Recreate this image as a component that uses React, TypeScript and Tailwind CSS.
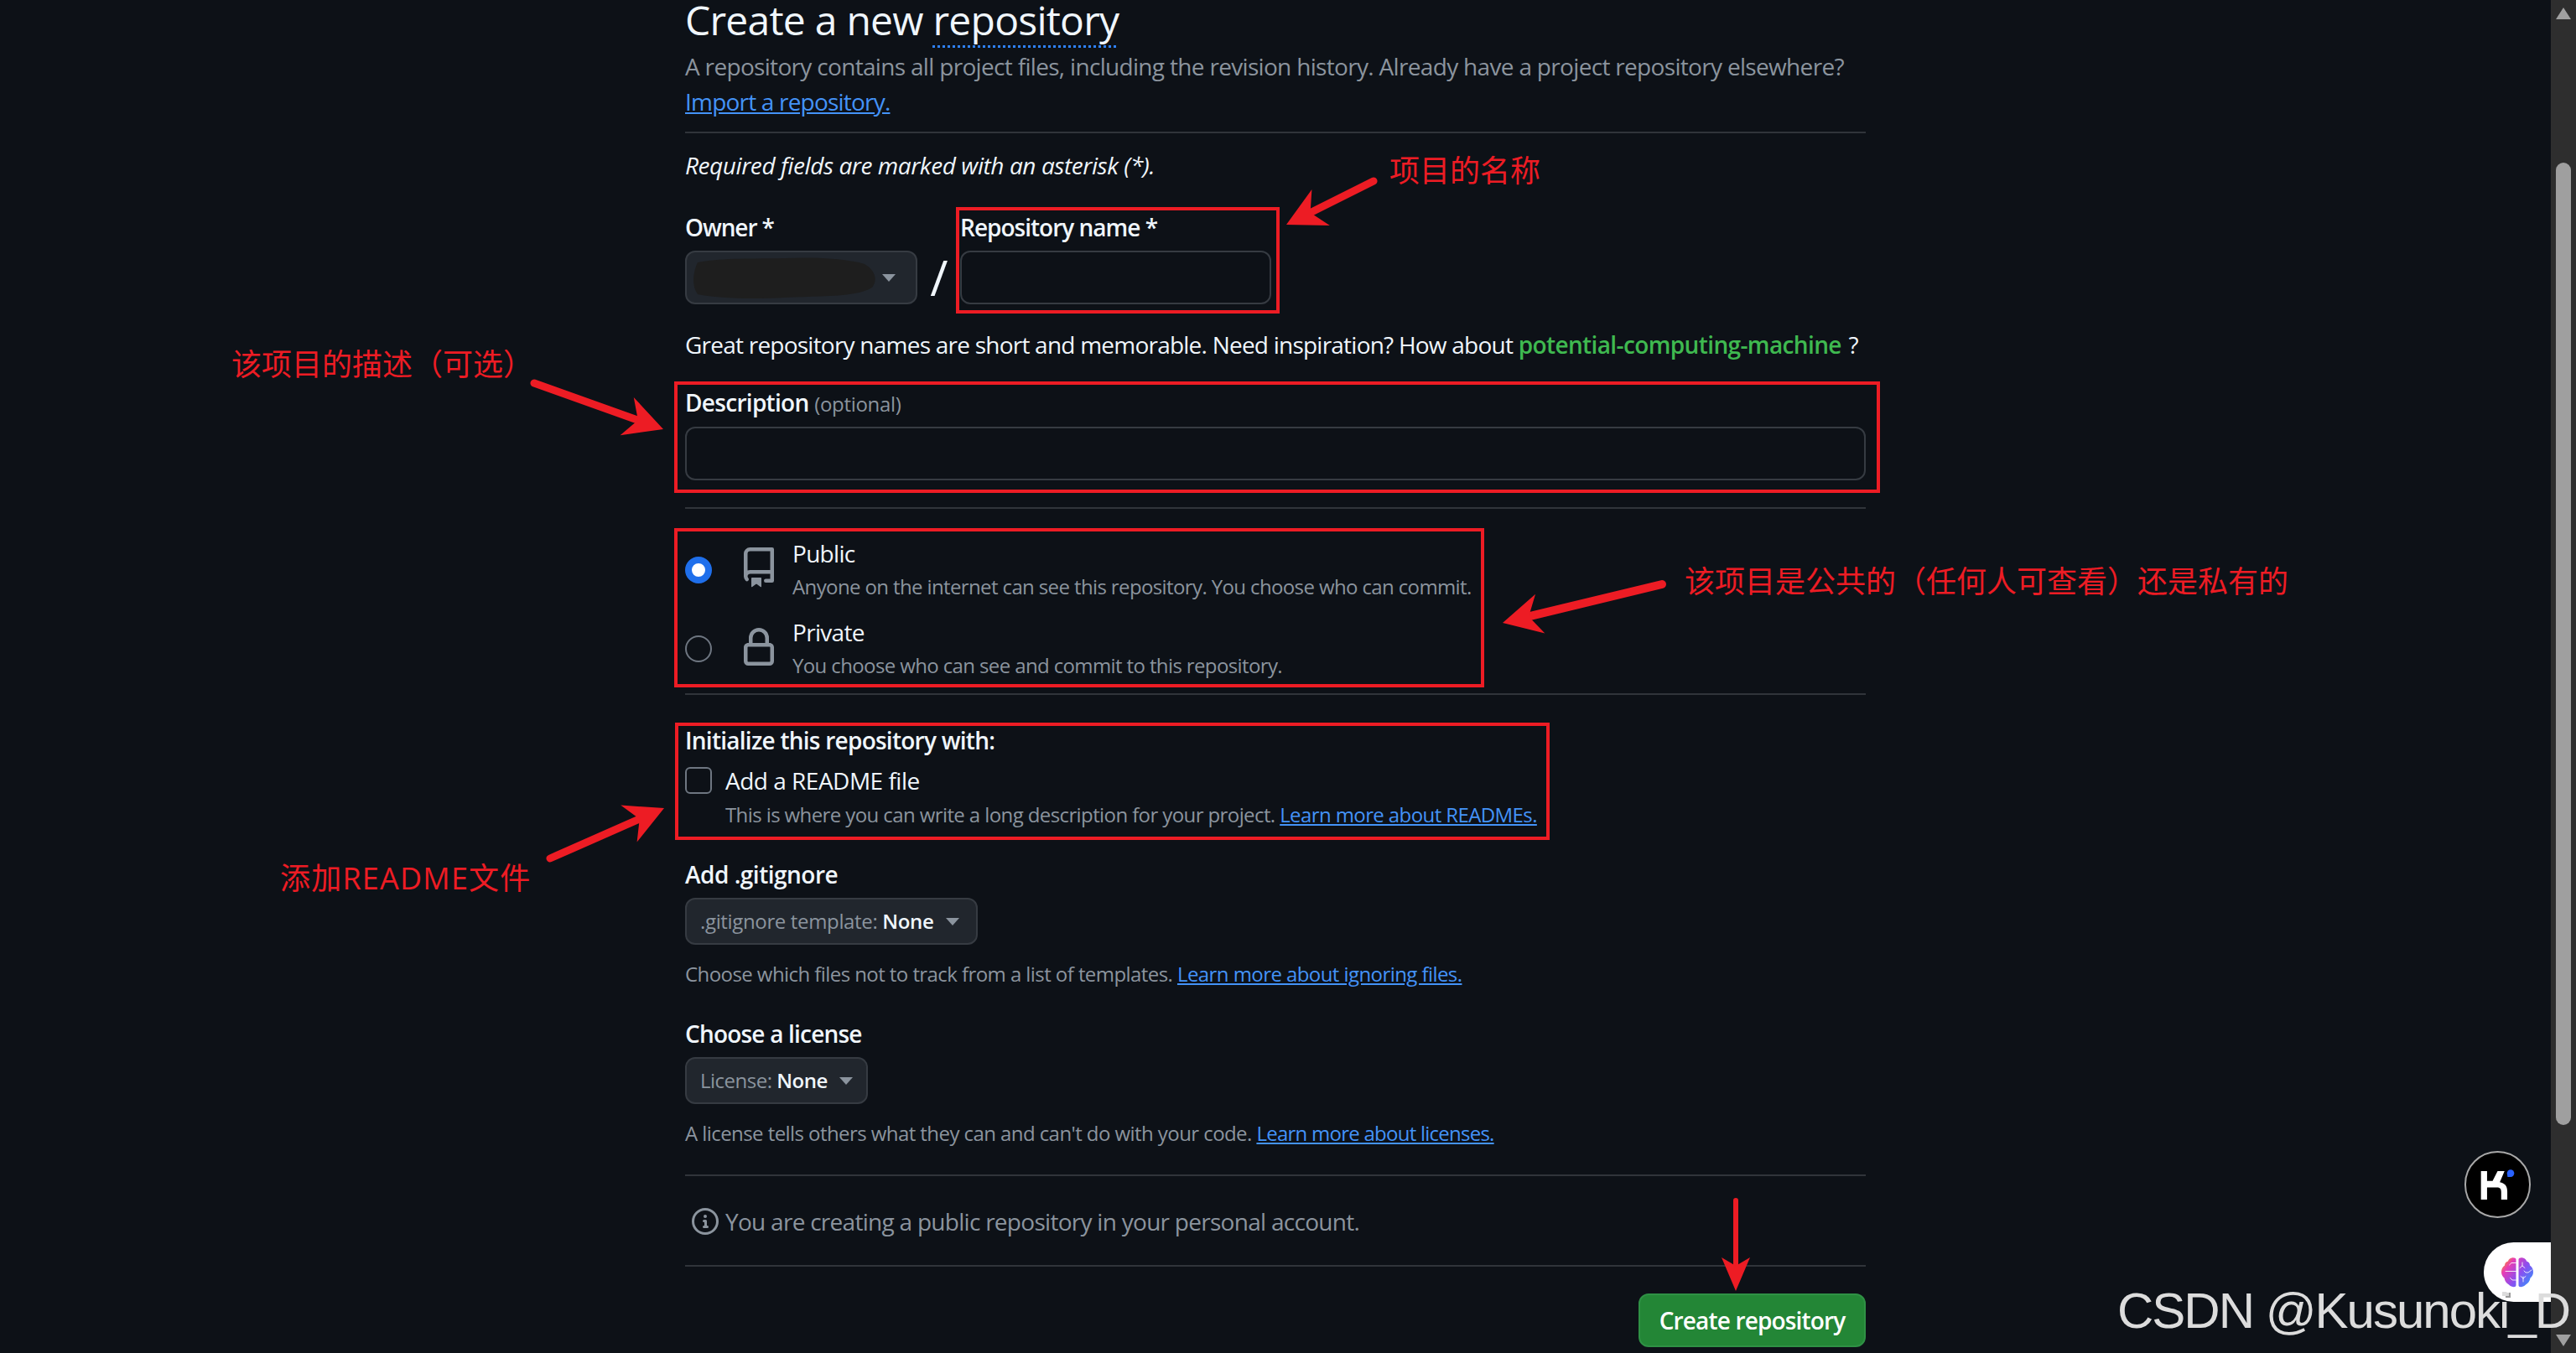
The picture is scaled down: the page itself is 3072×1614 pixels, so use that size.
import React from 'react';

const REPO_PATH = 'M2 2.5A2.5 2.5 0 0 1 4.5 0h8.75a.75.75 0 0 1 .75.75v12.5a.75.75 0 0 1-.75.75h-2.5a.75.75 0 0 1 0-1.5h1.75v-2h-8a1 1 0 0 0-.714 1.7.75.75 0 1 1-1.072 1.05A2.495 2.495 0 0 1 2 11.5Zm10.5-1h-8a1 1 0 0 0-1 1v6.708A2.486 2.486 0 0 1 4.5 9h8ZM5 12.25a.25.25 0 0 1 .25-.25h3.5a.25.25 0 0 1 .25.25v3.25a.25.25 0 0 1-.4.2l-1.45-1.087a.249.249 0 0 0-.3 0L5.4 15.7a.25.25 0 0 1-.4-.2Z';
const LOCK_PATH = 'M4 4a4 4 0 0 1 8 0v2h.25c.966 0 1.75.784 1.75 1.75v5.5A1.75 1.75 0 0 1 12.25 15h-8.5A1.75 1.75 0 0 1 2 13.25v-5.5C2 6.784 2.784 6 3.75 6H4Zm8.25 3.5h-8.5a.25.25 0 0 0-.25.25v5.5c0 .138.112.25.25.25h8.5a.25.25 0 0 0 .25-.25v-5.5a.25.25 0 0 0-.25-.25ZM10.5 6V4a2.5 2.5 0 1 0-5 0v2Z';
const INFO_PATH = 'M0 8a8 8 0 1 1 16 0A8 8 0 0 1 0 8Zm8-6.5a6.5 6.5 0 1 0 0 13 6.5 6.5 0 0 0 0-13ZM6.5 7.75A.75.75 0 0 1 7.25 7h1a.75.75 0 0 1 .75.75v2.75h.25a.75.75 0 0 1 0 1.5h-2a.75.75 0 0 1 0-1.5h.25v-2h-.25a.75.75 0 0 1-.75-.75ZM8 6a1 1 0 1 1 0-2 1 1 0 0 1 0 2Z';

function Octicon({ d, size, className }: { d: string; size: number; className?: string }) {
  return (
    <svg viewBox="0 0 16 16" width={size} height={size} fill="currentColor" className={className}>
      <path d={d} />
    </svg>
  );
}

function Caret() {
  return <span className="w-0 h-0 border-x-[8px] border-x-transparent border-t-[9px] border-t-[#8b949e]" />;
}

function Divider({ className }: { className: string }) {
  return <div className={`h-[2px] bg-[#30343a] ${className}`} />;
}

function Arrow({ x1, y1, x2, y2, w = 9, len = 46, half = 24, notch = 32 }: { x1: number; y1: number; x2: number; y2: number; w?: number; len?: number; half?: number; notch?: number }) {
  const l = Math.hypot(x2 - x1, y2 - y1);
  const ux = (x2 - x1) / l;
  const uy = (y2 - y1) / l;
  const at = (along: number, side: number) => `${x2 - ux * along - uy * side},${y2 - uy * along + ux * side}`;
  return (
    <g>
      <line x1={x1} y1={y1} x2={x2 - ux * notch} y2={y2 - uy * notch} stroke="#ed1c24" strokeWidth={w} strokeLinecap="round" />
      <polygon points={`${at(0, 0)} ${at(len, half)} ${at(notch, 0)} ${at(len, -half)}`} fill="#ed1c24" />
    </g>
  );
}

export default function App() {
  return (
    <div className="relative flex w-[3072px] h-[1614px] overflow-hidden bg-[#0d1117] font-['Open_Sans','Noto_Sans_CJK_SC',sans-serif] text-[28px] leading-[42px] text-[#f0f6fc]">
      <main className="flex-1 min-w-0 pl-[817px]">
        <div className="w-[1408px] tracking-[-0.7px]">
          {/* Page heading */}
          <h1 className="text-[48px] leading-[48px] font-medium tracking-[-0.75px]">
            Create a new <span className="underline decoration-dotted decoration-[#2f81f7] decoration-[3px] underline-offset-[12px]">repository</span>
          </h1>
          <p className="mt-[10px] tracking-[-0.68px] text-[#8b949e]">A repository contains all project files, including the revision history. Already have a project repository elsewhere?</p>
          <a className="block tracking-[-0.8px] text-[#4493f8] underline">Import a repository.</a>
          <Divider className="mt-[15px]" />

          <p className="mt-[17px] italic tracking-[-0.42px]">Required fields are marked with an asterisk (*).</p>

          {/* Owner and name */}
          <div className="mt-[32px] flex items-end">
            <div>
              <div className="font-semibold tracking-[-1.1px]">Owner *</div>
              <div className="relative mt-[7px] w-[277px] h-[64px] rounded-[12px] border-2 border-[#363b42] bg-[#21262d] flex items-center justify-end pr-[24px]">
                <svg viewBox="0 0 220 52" className="absolute left-[6px] top-[4px] w-[222px] h-[52px]">
                  <path d="M6 8 C40 2 70 4 110 3 C150 1 185 4 205 10 C216 16 222 28 214 38 C195 50 150 48 110 50 C70 52 30 51 6 46 C-2 36 1 18 6 8Z" fill="#1e1e1e" />
                </svg>
                <Caret />
              </div>
            </div>
            <div className="w-[51px] h-[64px] flex items-center justify-center text-[58px] font-normal text-[#f0f6fc]">/</div>
            <div>
              <div className="font-semibold tracking-[-1px]">Repository name *</div>
              <div className="mt-[7px] w-[371px] h-[64px] rounded-[12px] border-2 border-[#363b42] bg-[#0d1117]" />
            </div>
          </div>

          <p className="mt-[27px] tracking-[-0.77px]">
            Great repository names are short and memorable. Need inspiration? How about <span className="font-semibold tracking-[-0.62px] text-[#3fb950]">potential-computing-machine</span> <span className="ml-[2px]">?</span>
          </p>

          {/* Description */}
          <div className="mt-[27px] font-semibold">
            Description <span className="text-[24px] font-normal tracking-[-0.3px] text-[#8b949e]">(optional)</span>
          </div>
          <div className="mt-[6px] h-[64px] rounded-[12px] border-2 border-[#363b42] bg-[#0d1117]" />
          <Divider className="mt-[32px]" />

          {/* Visibility */}
          <div className="mt-[32px] flex">
            <span className="mt-[25px] w-[32px] h-[32px] rounded-full border-[8px] border-[#1f6feb] bg-white" />
            <Octicon d={REPO_PATH} size={48} className="ml-[32px] mt-[14px] text-[#8b949e]" />
            <div className="ml-[16px]">
              <div>Public</div>
              <div className="mt-[1px] text-[24px] leading-[36px] tracking-[-0.62px] text-[#8b949e]">Anyone on the internet can see this repository. You choose who can commit.</div>
            </div>
          </div>
          <div className="mt-[15px] flex">
            <span className="mt-[25px] w-[32px] h-[32px] rounded-full border-2 border-[#6e7681]" />
            <Octicon d={LOCK_PATH} size={48} className="ml-[32px] mt-[16px] text-[#8b949e]" />
            <div className="ml-[16px]">
              <div>Private</div>
              <div className="mt-[1px] text-[24px] leading-[36px] tracking-[-0.62px] text-[#8b949e]">You choose who can see and commit to this repository.</div>
            </div>
          </div>
          <Divider className="mt-[15px]" />

          {/* Initialize */}
          <div className="mt-[33px] font-semibold tracking-[-0.75px]">Initialize this repository with:</div>
          <div className="mt-[6px] flex items-center">
            <span className="w-[32px] h-[32px] rounded-[6px] border-2 border-[#6e7681]" />
            <span className="ml-[16px] tracking-[-0.5px]">Add a README file</span>
          </div>
          <p className="mt-[2px] pl-[48px] text-[24px] leading-[36px] tracking-[-0.6px] text-[#8b949e]">
            This is where you can write a long description for your project. <a className="text-[#4493f8] underline">Learn more about READMEs.</a>
          </p>

          {/* Gitignore */}
          <div className="mt-[32px] font-semibold tracking-[-0.5px]">Add .gitignore</div>
          <div className="mt-[7px] w-[349px] h-[56px] rounded-[12px] border-2 border-[#363b42] bg-[#21262d] flex items-center pl-[16px] text-[24px] tracking-[-0.35px] text-[#8b949e]">
            <span>.gitignore template: <strong className="font-semibold text-[#f0f6fc]">None</strong></span>
            <span className="ml-[15px] flex"><Caret /></span>
          </div>
          <p className="mt-[17px] text-[24px] leading-[36px] tracking-[-0.57px] text-[#8b949e]">
            Choose which files not to track from a list of templates. <a className="text-[#4493f8] underline">Learn more about ignoring files.</a>
          </p>

          {/* License */}
          <div className="mt-[32px] font-semibold tracking-[-0.8px]">Choose a license</div>
          <div className="mt-[7px] w-[218px] h-[56px] rounded-[12px] border-2 border-[#363b42] bg-[#21262d] flex items-center pl-[16px] text-[24px] tracking-[-0.5px] text-[#8b949e]">
            <span>License: <strong className="font-semibold text-[#f0f6fc]">None</strong></span>
            <span className="ml-[14px] flex"><Caret /></span>
          </div>
          <p className="mt-[17px] text-[24px] leading-[36px] tracking-[-0.57px] text-[#8b949e]">
            A license tells others what they can and can't do with your code. <a className="tracking-[-0.75px] text-[#4493f8] underline">Learn more about licenses.</a>
          </p>
          <Divider className="mt-[31px]" />

          <div className="mt-[33px] flex items-center pl-[8px] text-[#8b949e]">
            <Octicon d={INFO_PATH} size={32} />
            <span className="ml-[8px] tracking-[-0.72px]">You are creating a public repository in your personal account.</span>
          </div>
          <Divider className="mt-[31px]" />

          <div className="mt-[32px] flex justify-end">
            <button className="w-[271px] h-[64px] rounded-[12px] border-2 border-[#2f9145] bg-[#238636] font-semibold tracking-[-0.85px] text-white">Create repository</button>
          </div>
        </div>
      </main>

      {/* Browser scrollbar */}
      <aside className="w-[30px] shrink-0 bg-[#2e2e2e] flex flex-col items-center">
        <span className="mt-[9px] w-0 h-0 border-x-[9px] border-x-transparent border-b-[14px] border-b-[#a0a0a0]" />
        <span className="mt-[171px] w-[18px] h-[1148px] rounded-full bg-[#9f9f9f]" />
        <span className="mt-[250px] w-0 h-0 border-x-[9px] border-x-transparent border-t-[14px] border-t-[#a0a0a0]" />
      </aside>

      {/* Red annotation boxes */}
      <div className="absolute left-[1140px] top-[247px] w-[386px] h-[127px] border-4 border-[#ed1c24]" />
      <div className="absolute left-[804px] top-[455px] w-[1438px] h-[133px] border-4 border-[#ed1c24]" />
      <div className="absolute left-[804px] top-[630px] w-[966px] h-[190px] border-4 border-[#ed1c24]" />
      <div className="absolute left-[805px] top-[862px] w-[1043px] h-[140px] border-4 border-[#ed1c24]" />

      {/* Annotation labels */}
      <span className="absolute left-[1657px] top-[177px] text-[36px] leading-[54px] text-[#ed1c24]">项目的名称</span>
      <span className="absolute left-[276px] top-[408px] text-[36px] leading-[54px] text-[#ed1c24]">该项目的描述（可选）</span>
      <span className="absolute left-[2009px] top-[667px] text-[36px] leading-[54px] text-[#ed1c24]">该项目是公共的（任何人可查看）还是私有的</span>
      <span className="absolute left-[334px] top-[1021px] text-[36px] leading-[54px] tracking-[1.2px] text-[#ed1c24]">添加README文件</span>

      {/* Annotation arrows */}
      <svg className="absolute inset-0 pointer-events-none" width={3072} height={1614}>
        <Arrow x1={1638} y1={216} x2={1534} y2={268} />
        <Arrow x1={637} y1={457} x2={791} y2={512} />
        <Arrow x1={1982} y1={697} x2={1792} y2={743} w={10} />
        <Arrow x1={656} y1={1024} x2={792} y2={964} />
        <Arrow x1={2070} y1={1432} x2={2070} y2={1540} w={6} len={40} half={17} notch={30} />
      </svg>

      {/* Floating extension buttons */}
      <div className="absolute left-[2939px] top-[1373px] w-[79px] h-[80px] rounded-full border-2 border-[#a8a8a8] bg-black flex items-center justify-center">
        <svg viewBox="85 88 130 115" width={43} height={38}>
          <path d="M90 97H112V133H132L150 97H175L158 137C175 140 185 150 185 170V200H163V172C163 160 158 156 148 156H112V200H90Z" fill="#fff" />
          <path d="M186 118L184 105A13 13 0 1 1 197 118Z" fill="#2962ff" />
        </svg>
      </div>
      <div className="absolute left-[2962px] top-[1482px] w-[80px] h-[71px] rounded-l-[36px] bg-white flex items-center justify-center">
        <svg viewBox="0 0 38 36" width={38} height={36}>
          <defs>
            <linearGradient id="brain" gradientUnits="userSpaceOnUse" x1="2" y1="3" x2="36" y2="30">
              <stop offset="0" stopColor="#fb9a1c" />
              <stop offset="0.22" stopColor="#e83cb4" />
              <stop offset="0.6" stopColor="#8a4ff0" />
              <stop offset="1" stopColor="#3d8bfa" />
            </linearGradient>
          </defs>
          <path d="M17.5 2.5C17.5 1 15 0 12.5 0.5 10 1 8.5 2.5 8 4.5 5.5 5 4 7 4 9.5 1.5 11 0 14 0 17.5 0 20.5 1.5 23 3.5 24.5 4 28 6 31 9 32.5 12 35.5 17.5 36.5 17.5 33Z" fill="url(#brain)" />
          <path d="M20.5 2.5C20.5 1 23 0 25.5 0.5 28 1 29.5 2.5 30 4.5 32.5 5 34 7 34 9.5 36.5 11 38 14 38 17.5 38 20.5 36.5 23 34.5 24.5 34 28 32 31 29 32.5 26 35.5 20.5 36.5 20.5 33Z" fill="url(#brain)" />
          <g stroke="#fff" strokeWidth="1" fill="none" strokeLinecap="round" opacity="0.85">
            <path d="M17.5 6.5H12L9.5 9" />
            <path d="M17.5 16.5H5" />
            <path d="M17.5 27H13L10.5 24.5" />
            <path d="M25 6V10L22 12.5M25 10L28 12.5" />
            <path d="M36 15L32 18H29L27 16" />
            <path d="M26 23V29M26 25L23 22.5M26 25L29 22.5" />
          </g>
        </svg>
      </div>
      <span className="absolute left-[2988px] top-[1542px] w-[6px] h-[6px] border-r-2 border-b-2 border-[#9a9a9a] bg-[#d8d8d8]" />

      {/* CSDN watermark */}
      <span className="absolute left-[2525px] top-[1529px] font-['Liberation_Sans',sans-serif] text-[60px] leading-[69px] tracking-[-2px] whitespace-nowrap text-[#dcdcdc]">CSDN @Kusunoki_D</span>
    </div>
  );
}
